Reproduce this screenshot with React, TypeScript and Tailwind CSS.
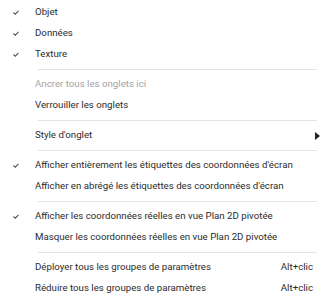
import React from "react";

type Item =
  | { sep: true }
  | {
      sep?: false;
      label: string;
      checked?: boolean;
      disabled?: boolean;
      shortcut?: string;
      submenu?: boolean;
    };

const items: Item[] = [
  { label: "Objet", checked: true },
  { label: "Données", checked: true },
  { label: "Texture", checked: true },
  { sep: true },
  { label: "Ancrer tous les onglets ici", disabled: true },
  { label: "Verrouiller les onglets" },
  { sep: true },
  { label: "Style d'onglet", submenu: true },
  { sep: true },
  { label: "Afficher entièrement les étiquettes des coordonnées d'écran", checked: true },
  { label: "Afficher en abrégé les étiquettes des coordonnées d'écran" },
  { sep: true },
  { label: "Afficher les coordonnées réelles en vue Plan 2D pivotée", checked: true },
  { label: "Masquer les coordonnées réelles en vue Plan 2D pivotée" },
  { sep: true },
  { label: "Déployer tous les groupes de paramètres", shortcut: "Alt+clic" },
  { label: "Réduire tous les groupes de paramètres", shortcut: "Alt+clic" },
];

function Check() {
  return (
    <svg width="6" height="5" viewBox="0 0 6 5" className="block">
      <path d="M0.5 2.5 L2.3 4.2 L5.5 0.8" fill="none" stroke="#555" strokeWidth="1.1" />
    </svg>
  );
}

export default function App() {
  return (
    <div className="w-[324px] h-[300px] bg-white overflow-hidden pt-[2px] text-[9.7px] text-[#2b2b2b] font-['Roboto',sans-serif]">
      {items.map((it, i) =>
        it.sep ? (
          <div key={i} className="h-[9px] flex items-center pl-[38px] pr-[7px]">
            <div className="h-px w-full bg-[#e3e3e3]" />
          </div>
        ) : (
          <div key={i} className="h-[21px] flex items-center">
            <div className="w-[35px] shrink-0 flex justify-center pl-[1px] pr-[4px]">
              {it.checked && <Check />}
            </div>
            <span className={"flex-1 whitespace-nowrap " + (it.disabled ? "text-[#a3a3a3]" : "")}>
              {it.label}
            </span>
            {it.shortcut && <span className="shrink-0 pr-[11px]">{it.shortcut}</span>}
            {it.submenu && (
              <svg width="5" height="8" viewBox="0 0 5 8" className="shrink-0 mr-[4px]">
                <path d="M0 0 L5 4 L0 8 Z" fill="#222" />
              </svg>
            )}
          </div>
        )
      )}
    </div>
  );
}
